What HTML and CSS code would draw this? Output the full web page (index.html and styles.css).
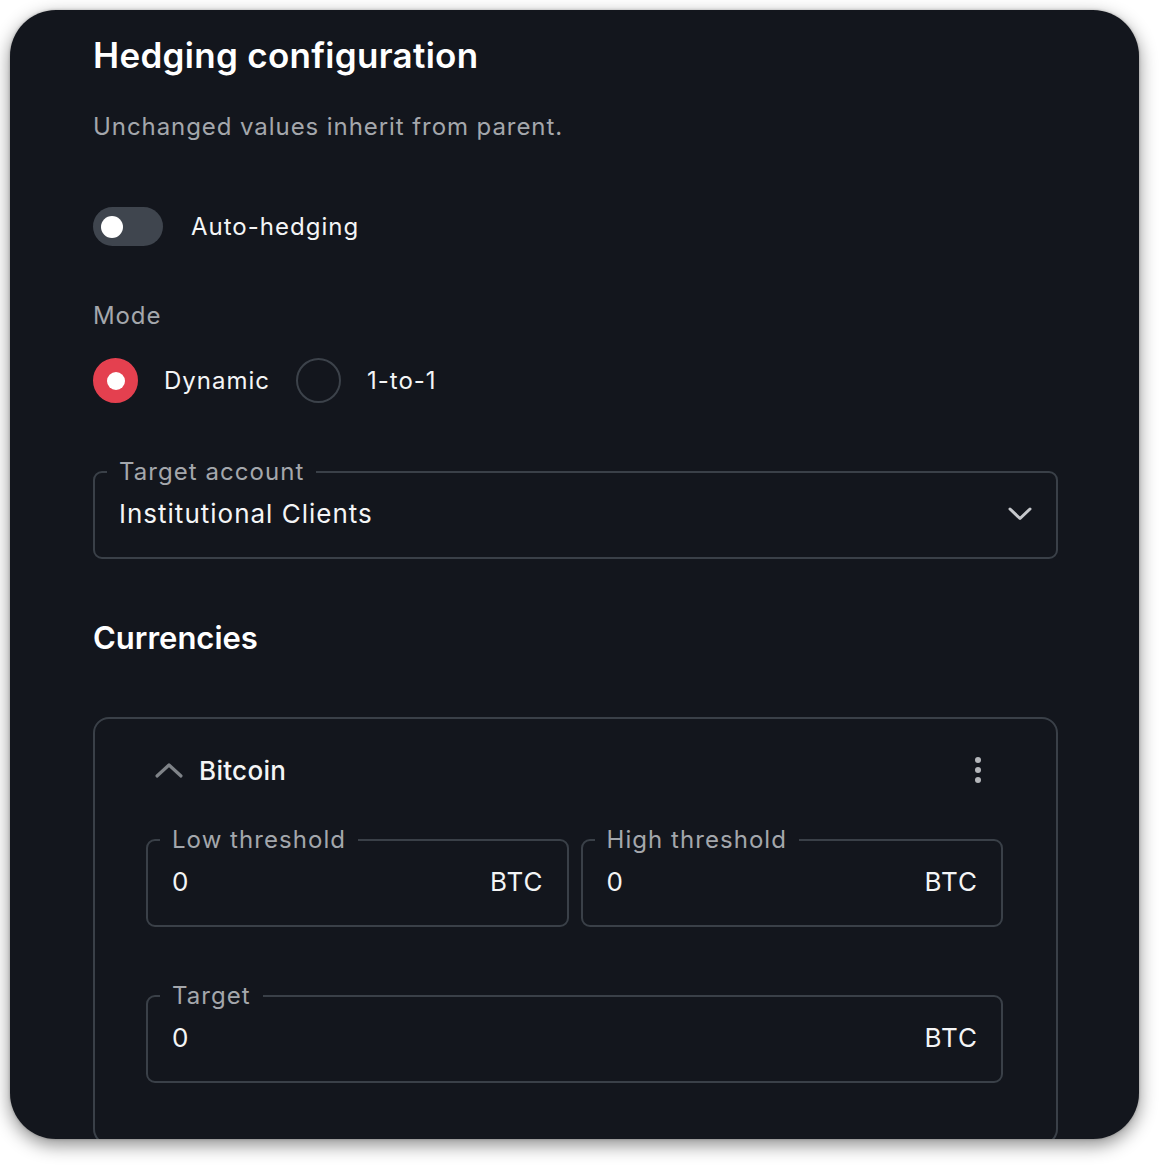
FILE: index.html
```html
<!DOCTYPE html>
<html lang="en">
<head>
<meta charset="utf-8">
<title>Hedging configuration</title>
<link rel="stylesheet" href="styles.css">
</head>
<body>
<div class="card">
  <h1 class="title">Hedging configuration</h1>
  <p class="subtitle">Unchanged values inherit from parent.</p>

  <div class="switch-row">
    <span class="switch"><span class="knob"></span></span>
    <span class="switch-label">Auto-hedging</span>
  </div>

  <div class="group-label">Mode</div>
  <div class="radio-row">
    <span class="radio checked"><span class="dot"></span></span>
    <span class="radio-label">Dynamic</span>
    <span class="radio"></span>
    <span class="radio-label">1-to-1</span>
  </div>

  <div class="field select">
    <span class="legend">Target account</span>
    <span class="value">Institutional Clients</span>
    <svg class="chev-down" width="26" height="16" viewBox="0 0 26 16"><path d="M3 3 L13 12.5 L23 3" fill="none" stroke="#c6c8cc" stroke-width="3" stroke-linecap="round" stroke-linejoin="round"/></svg>
  </div>

  <h2 class="section">Currencies</h2>

  <div class="currency">
    <div class="cur-head">
      <svg class="chev-up" width="30" height="20" viewBox="0 0 30 20"><path d="M3 16 L15 5 L27 16" fill="none" stroke="#7f8388" stroke-width="3.2" stroke-linecap="round" stroke-linejoin="round"/></svg>
      <span class="cur-name">Bitcoin</span>
      <span class="kebab"><i></i><i></i><i></i></span>
    </div>
    <div class="pair">
      <div class="field">
        <span class="legend">Low threshold</span>
        <span class="value">0</span>
        <span class="unit">BTC</span>
      </div>
      <div class="field">
        <span class="legend">High threshold</span>
        <span class="value">0</span>
        <span class="unit">BTC</span>
      </div>
    </div>
    <div class="field target">
      <span class="legend">Target</span>
      <span class="value">0</span>
      <span class="unit">BTC</span>
    </div>
  </div>
</div>
</body>
</html>
```

FILE: styles.css
```css
* { box-sizing: border-box; }
html, body { margin: 0; padding: 0; background: #ffffff; }
body {
  font-family: Inter, "Noto Sans", "Liberation Sans", sans-serif;
  color: #f4f5f6;
  width: 1169px;
  height: 1169px;
  overflow: hidden;
}
.card {
  margin: 10px;
  width: 1129px;
  height: 1129px;
  background: #13161d;
  border-radius: 46px;
  box-shadow: 0 6px 18px rgba(0,0,0,0.45), 0 0 3px rgba(0,0,0,0.25);
  padding: 25px 81px 0 83px;
  overflow: hidden;
}
.title {
  margin: 0;
  font-size: 35px;
  line-height: 40px;
  font-weight: 600;
  color: #ffffff;
  letter-spacing: 0.3px;
}
.subtitle {
  margin: 36px 0 0;
  font-size: 24px;
  line-height: 32px;
  color: #a4a7ac;
  letter-spacing: 0.93px;
}
.switch-row {
  margin-top: 64px;
  display: flex;
  align-items: center;
  height: 39px;
}
.switch {
  width: 70px;
  height: 39px;
  border-radius: 20px;
  background: #3f454e;
  display: flex;
  align-items: center;
  padding-left: 8px;
}
.knob {
  width: 22px;
  height: 22px;
  border-radius: 50%;
  background: #ffffff;
}
.switch-label {
  margin-left: 28px;
  font-size: 24px;
  letter-spacing: 1px;
  color: #f4f5f6;
}
.group-label {
  margin-top: 54px;
  font-size: 24px;
  line-height: 32px;
  color: #a4a7ac;
  letter-spacing: 0.9px;
}
.radio-row {
  margin-top: 26px;
  display: flex;
  align-items: center;
  height: 45px;
}
.radio {
  width: 45px;
  height: 45px;
  border-radius: 50%;
  border: 2px solid #3c424a;
  display: flex;
  align-items: center;
  justify-content: center;
  flex: none;
}
.radio.checked {
  background: #e4404f;
  border-color: #e4404f;
}
.radio .dot {
  width: 18px;
  height: 18px;
  border-radius: 50%;
  background: #ffffff;
}
.radio-label {
  margin-left: 26px;
  margin-right: 26px;
  font-size: 24px;
  letter-spacing: 1px;
  color: #f4f5f6;
}
.field {
  position: relative;
  height: 88px;
  border: 2px solid #3a4048;
  border-radius: 9px;
  display: flex;
  align-items: center;
  padding: 0 23px 3px 24px;
}
.field .legend {
  position: absolute;
  top: -15px;
  left: 12px;
  padding: 0 12px;
  background: #13161d;
  font-size: 24px;
  line-height: 28px;
  color: #a4a7ac;
  letter-spacing: 1.05px;
}
.field .value {
  flex: 1;
  font-size: 26px;
  letter-spacing: 1px;
  color: #f4f5f6;
}
.field .unit {
  font-size: 26px;
  letter-spacing: 1px;
  color: #f4f5f6;
}
.select {
  margin-top: 68px;
}
.chev-down { display: block; margin-right: 0; }
.section {
  margin: 61px 0 0;
  font-size: 31px;
  line-height: 36px;
  font-weight: 600;
  color: #ffffff;
}
.currency {
  margin-top: 61px;
  border: 2px solid #3a4048;
  border-radius: 16px;
  padding: 31px 53px 60px 51px;
}
.cur-head {
  display: flex;
  align-items: center;
  height: 40px;
  padding-left: 8px;
}
.chev-up { display: block; }
.cur-name {
  margin-left: 15px;
  flex: 1;
  font-size: 26px;
  font-weight: 500;
  letter-spacing: 0.3px;
  color: #f4f5f6;
}
.kebab {
  width: 12px;
  display: flex;
  flex-direction: column;
  align-items: center;
  gap: 4px;
  margin-right: 19px;
}
.kebab i {
  width: 6px;
  height: 6px;
  border-radius: 50%;
  background: #b4b6ba;
}
.pair {
  margin-top: 49px;
  display: grid;
  grid-template-columns: 1fr 1fr;
  gap: 12px;
}
.target {
  margin-top: 68px;
}
```
